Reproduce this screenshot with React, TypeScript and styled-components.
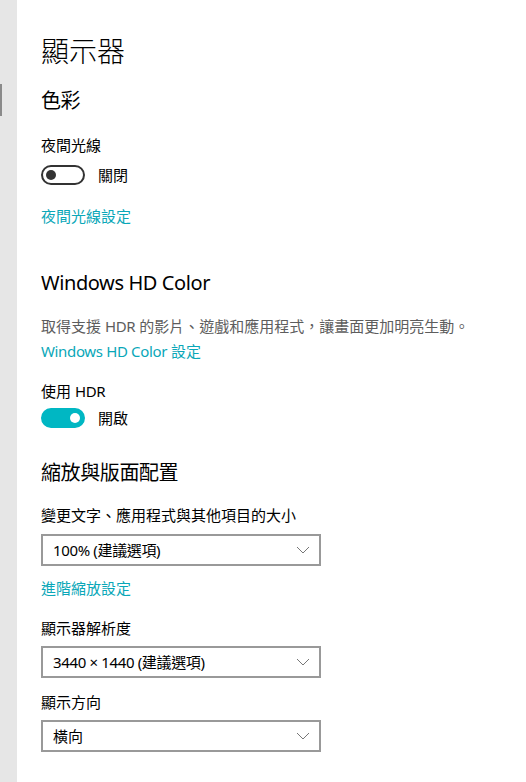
import React from "react";
import styled, { createGlobalStyle } from "styled-components";

const Global = createGlobalStyle`
  html, body { margin: 0; padding: 0; background: #fff; }
  body { font-family: "Noto Sans", "Noto Sans CJK TC", sans-serif; color: #000; }
`;

const Page = styled.div`
  display: flex;
  width: 526px;
  height: 782px;
  overflow: hidden;
  background: #fff;
`;

const Rail = styled.div`
  position: relative;
  width: 17px;
  flex: none;
  background: #e6e6e6;
`;

const RailMark = styled.div`
  position: absolute;
  left: 0;
  top: 84px;
  width: 2px;
  height: 32px;
  background: #8a8a8a;
`;

const Content = styled.main`
  display: flex;
  flex-direction: column;
  padding: 32px 0 0 24px;
`;

const Title = styled.h1`
  margin: 0;
  font-size: 28px;
  line-height: 36px;
  font-weight: 300;
  font-family: "Noto Sans CJK TC", sans-serif;
`;

const Heading = styled.h2<{ $mt: number }>`
  margin: ${(p) => p.$mt}px 0 0;
  font-size: 20px;
  line-height: 28px;
  font-weight: 400;
  letter-spacing: -0.4px;
  font-family: "Noto Sans", "Noto Sans CJK TC", sans-serif;
`;

const Latin = styled.span`
  letter-spacing: -0.35px;
`;

const Label = styled.div<{ $mt: number }>`
  margin-top: ${(p) => p.$mt}px;
  font-size: 15px;
  line-height: 20px;
`;

const Desc = styled(Label)`
  color: #5d5d5d;
`;

const Link = styled.a<{ $mt: number }>`
  display: block;
  margin-top: ${(p) => p.$mt}px;
  font-size: 15px;
  line-height: 20px;
  color: #0aa7b8;
  text-decoration: none;
`;

const ToggleRow = styled.div<{ $mt: number }>`
  display: flex;
  align-items: center;
  gap: 13px;
  margin-top: ${(p) => p.$mt}px;
  font-size: 15px;
  line-height: 20px;
`;

const Toggle = styled.div<{ $on: boolean }>`
  position: relative;
  box-sizing: border-box;
  width: 44px;
  height: 20px;
  border-radius: 10px;
  border: 2px solid ${(p) => (p.$on ? "#00b7c3" : "#333")};
  background: ${(p) => (p.$on ? "#00b7c3" : "#fff")};
  &::after {
    content: "";
    position: absolute;
    top: 3px;
    left: ${(p) => (p.$on ? "27px" : "3px")};
    width: 10px;
    height: 10px;
    border-radius: 50%;
    background: ${(p) => (p.$on ? "#fff" : "#333")};
  }
`;

const Select = styled.div<{ $mt: number }>`
  box-sizing: border-box;
  display: flex;
  align-items: center;
  justify-content: space-between;
  width: 280px;
  height: 32px;
  margin-top: ${(p) => p.$mt}px;
  padding: 0 9px 0 10px;
  border: 2px solid #999;
  font-size: 15px;
  line-height: 20px;
`;

const Chevron = () => (
  <svg width="14" height="8" viewBox="0 0 14 8">
    <path d="M1 1 L7 7 L13 1" fill="none" stroke="#777" strokeWidth="1" />
  </svg>
);

export default function App() {
  return (
    <Page>
      <Global />
      <Rail>
        <RailMark />
      </Rail>
      <Content>
        <Title>顯示器</Title>
        <Heading $mt={19}>色彩</Heading>
        <Label $mt={20}>夜間光線</Label>
        <ToggleRow $mt={10}>
          <Toggle $on={false} />
          <span>關閉</span>
        </ToggleRow>
        <Link $mt={21}>夜間光線設定</Link>
        <Heading $mt={43}>Windows HD Color</Heading>
        <Desc $mt={19}>
          取得支援 <Latin>HDR</Latin> 的影片、遊戲和應用程式，讓畫面更加明亮生動。
        </Desc>
        <Link $mt={5}>
          <Latin>Windows HD Color</Latin> 設定
        </Link>
        <Label $mt={20}>
          使用 <Latin>HDR</Latin>
        </Label>
        <ToggleRow $mt={7}>
          <Toggle $on={true} />
          <span>開啟</span>
        </ToggleRow>
        <Heading $mt={31}>縮放與版面配置</Heading>
        <Label $mt={18}>變更文字、應用程式與其他項目的大小</Label>
        <Select $mt={9}>
          <Latin>100% (建議選項)</Latin>
          <Chevron />
        </Select>
        <Link $mt={12}>進階縮放設定</Link>
        <Label $mt={20}>顯示器解析度</Label>
        <Select $mt={8}>
          <Latin>3440 × 1440 (建議選項)</Latin>
          <Chevron />
        </Select>
        <Label $mt={14}>顯示方向</Label>
        <Select $mt={8}>
          <span>橫向</span>
          <Chevron />
        </Select>
      </Content>
    </Page>
  );
}
